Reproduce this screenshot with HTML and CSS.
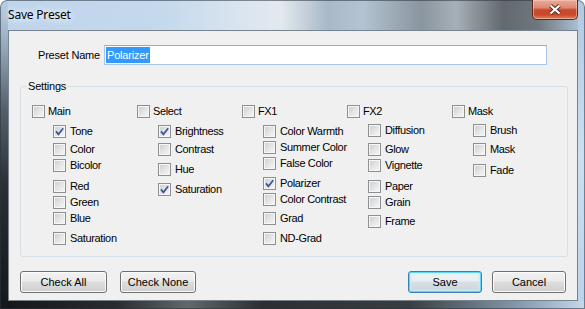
FILE: index.html
```html
<!DOCTYPE html>
<html>
<head>
<meta charset="utf-8">
<title>Save Preset</title>
<link rel="stylesheet" href="styles.css">
</head>
<body>
<div class="window">
  <div class="titlebar">
    <span class="title">Save Preset</span>
    <div class="close">
      <svg width="14" height="11" viewBox="0 0 14 11">
        <path class="x-shadow" d="M2.5 1.5 L11.5 9.5 M11.5 1.5 L2.5 9.5"/>
        <path class="x-mark" d="M2.5 1.5 L11.5 9.5 M11.5 1.5 L2.5 9.5"/>
      </svg>
    </div>
  </div>

  <div class="client">
    <div class="name-row">
      <label class="name-label">Preset Name</label>
      <div class="name-input"><span class="sel">Polarizer</span></div>
    </div>

    <fieldset class="settings">
      <legend>Settings</legend>
      <div class="cols">
        <!-- Main -->
        <div class="col">
          <div class="cb head"><span class="box"></span>Main</div>
          <div class="subs">
            <div class="cb m7"><span class="box on"><svg viewBox="0 0 11 11"><path d="M2 5.4 L4.4 8.3 L9.2 2.2"/></svg></span>Tone</div>
            <div class="cb m5"><span class="box"></span>Color</div>
            <div class="cb m3"><span class="box"></span>Bicolor</div>
            <div class="cb m8"><span class="box"></span>Red</div>
            <div class="cb m3"><span class="box"></span>Green</div>
            <div class="cb m3"><span class="box"></span>Blue</div>
            <div class="cb m7"><span class="box"></span>Saturation</div>
          </div>
        </div>
        <!-- Select -->
        <div class="col">
          <div class="cb head"><span class="box"></span>Select</div>
          <div class="subs">
            <div class="cb m7"><span class="box on"><svg viewBox="0 0 11 11"><path d="M2 5.4 L4.4 8.3 L9.2 2.2"/></svg></span>Brightness</div>
            <div class="cb m5"><span class="box"></span>Contrast</div>
            <div class="cb m7"><span class="box"></span>Hue</div>
            <div class="cb m7"><span class="box on"><svg viewBox="0 0 11 11"><path d="M2 5.4 L4.4 8.3 L9.2 2.2"/></svg></span>Saturation</div>
          </div>
        </div>
        <!-- FX1 -->
        <div class="col">
          <div class="cb head"><span class="box"></span>FX1</div>
          <div class="subs">
            <div class="cb m7"><span class="box"></span>Color Warmth</div>
            <div class="cb m3"><span class="box"></span>Summer Color</div>
            <div class="cb m3"><span class="box"></span>False Color</div>
            <div class="cb m7"><span class="box on"><svg viewBox="0 0 11 11"><path d="M2 5.4 L4.4 8.3 L9.2 2.2"/></svg></span>Polarizer</div>
            <div class="cb m3"><span class="box"></span>Color Contrast</div>
            <div class="cb m6"><span class="box"></span>Grad</div>
            <div class="cb m7"><span class="box"></span>ND-Grad</div>
          </div>
        </div>
        <!-- FX2 -->
        <div class="col">
          <div class="cb head"><span class="box"></span>FX2</div>
          <div class="subs">
            <div class="cb m6"><span class="box"></span>Diffusion</div>
            <div class="cb m6"><span class="box"></span>Glow</div>
            <div class="cb m3"><span class="box"></span>Vignette</div>
            <div class="cb m8"><span class="box"></span>Paper</div>
            <div class="cb m3"><span class="box"></span>Grain</div>
            <div class="cb m6"><span class="box"></span>Frame</div>
          </div>
        </div>
        <!-- Mask -->
        <div class="col">
          <div class="cb head"><span class="box"></span>Mask</div>
          <div class="subs">
            <div class="cb m6"><span class="box"></span>Brush</div>
            <div class="cb m6"><span class="box"></span>Mask</div>
            <div class="cb m8"><span class="box"></span>Fade</div>
          </div>
        </div>
      </div>
    </fieldset>

    <div class="buttons">
      <div class="btn-group">
        <button class="btn w-all">Check All</button>
        <button class="btn w-none">Check None</button>
      </div>
      <div class="btn-group right">
        <button class="btn default">Save</button>
        <button class="btn">Cancel</button>
      </div>
    </div>
  </div>
</div>
</body>
</html>
```

FILE: styles.css
```css
* {
    box-sizing: border-box;
}

body {
    margin: 0;
    background: #ffffff;
    font-family: "Liberation Sans", Arial, sans-serif;
    font-size: 11px;
    color: #000;
}

/* window frame (aero glass, faked with gradients) */
.window {
    width: 585px;
    height: 309px;
    display: flex;
    flex-direction: column;
    padding: 0 7px 8px 8px;
    border-radius: 7px 7px 0 0;
    overflow: hidden;
    background:
        linear-gradient(to bottom, #b8cfe6 0, #9fb3c6 12%, #56606a 35%, #2b2f33 60%, #15171a 100%) left top / 8px 100% no-repeat,
        linear-gradient(to right, #141516 0, #2a2c2e 20%, #64686b 32%, #2c2e31 45%, #3b3e41 70%, #8aa0b5 90%, #c6d8ea 100%) left bottom / 100% 8px no-repeat,
        linear-gradient(to bottom, #b0c8e0 0, #cddff0 50%, #bcd2e8 100%) right top / 7px 100% no-repeat,
        linear-gradient(to right, #bed4eb 0, #c5d9ed 28%, #dbe5ef 42%, #e3e9ee 48%, #a9b9c8 56%, #b3c3d2 62%, #8a959e 72%, #a7b0b7 78%, #63696e 86%, #6f777d 92%, #b4cbe2 100%);
    box-shadow: inset 0 0 0 1px rgba(40, 52, 66, 0.55);
}

.titlebar {
    height: 30px;
    display: flex;
    justify-content: space-between;
    align-items: flex-start;
}

.title {
    font-family: "Noto Sans", "Open Sans", sans-serif;
    font-size: 12px;
    line-height: 30px;
    letter-spacing: -0.2px;
    text-shadow: 0 0 6px #fff, 0 0 10px #fff;
}

.close {
    width: 46px;
    height: 20px;
    display: flex;
    align-items: center;
    justify-content: center;
    border: 1px solid #5e2a20;
    border-top: none;
    border-radius: 0 0 5px 5px;
    background: linear-gradient(#e9ab9a 0, #dc8a74 40%, #c9492d 52%, #c94a2c 78%, #dd8461 100%);
    box-shadow: inset 0 0 0 1px rgba(255, 210, 195, 0.5);
}

.x-shadow {
    stroke: #5a2418;
    stroke-width: 4;
    fill: none;
}

.x-mark {
    stroke: #ffffff;
    stroke-width: 2.2;
    fill: none;
}

/* client area */
.client {
    flex: 1;
    background: #f0f0f0;
    border: 1px solid #76828e;
    padding: 14px 9px 0 11px;
}

.name-row {
    display: flex;
    align-items: center;
}

.name-label {
    width: 80px;
    margin-right: 4px;
    text-align: right;
    letter-spacing: -0.2px;
}

.name-input {
    width: 443px;
    height: 20px;
    padding: 1px;
    background: #fff;
    border: 1px solid #a9c8e6;
    border-top-color: #86afd8;
}

.sel {
    display: inline-block;
    height: 16px;
    line-height: 16px;
    padding: 0 1px;
    background: #3399ff;
    color: #fff;
    letter-spacing: -0.2px;
}

.settings {
    margin: 15px 0 0;
    padding: 12px 8px 11px 11px;
    border: 1px solid #d5dfe5;
    border-radius: 3px;
    min-width: 0;
}

.settings legend {
    margin-left: -5px;
    padding: 0 1px;
    line-height: 13px;
    letter-spacing: -0.2px;
}

.cols {
    display: grid;
    grid-template-columns: repeat(4, 105px) auto;
}

.cb {
    display: flex;
    align-items: center;
    gap: 4px;
    height: 13px;
    line-height: 13px;
    white-space: nowrap;
    letter-spacing: -0.35px;
}

.cb.head {
    gap: 3px;
}

.subs {
    padding-left: 21px;
}

.m3 { margin-top: 3px; }
.m5 { margin-top: 5px; }
.m6 { margin-top: 6px; }
.m7 { margin-top: 7px; }
.m8 { margin-top: 8px; }

.box {
    flex: none;
    width: 13px;
    height: 13px;
    border: 1px solid #8e8f8f;
    background: linear-gradient(135deg, #c9cdd2 0, #e2e4e6 50%, #f7f7f7 100%);
    box-shadow: inset 0 0 0 1px #f6f6f6;
}

.box svg {
    display: block;
    width: 11px;
    height: 11px;
}

.box svg path {
    fill: none;
    stroke: #3a5590;
    stroke-width: 1.7;
}

/* buttons */
.buttons {
    display: flex;
    justify-content: space-between;
    margin-top: 14px;
    padding-right: 2px;
}

.btn-group {
    display: flex;
    gap: 13px;
}

.btn-group.right {
    gap: 10px;
}

.btn {
    width: 74px;
    height: 22px;
    padding: 0;
    font-family: inherit;
    font-size: 11px;
    color: #000;
    border: 1px solid #707070;
    border-radius: 3px;
    background: linear-gradient(#f2f2f2 0, #ebebeb 45%, #dddddd 50%, #cfcfcf 100%);
    box-shadow: inset 0 0 0 1px #fbfbfb;
}

.btn.w-all {
    width: 87px;
}

.btn.w-none {
    width: 76px;
}

.btn.default {
    border-color: #3c7fb1;
    background: linear-gradient(#eaf6fd 0, #d9f0fc 45%, #bee6fd 50%, #a7d9f5 100%);
    background: linear-gradient(#f0f4f6 0, #e8eef1 45%, #d8e0e5 50%, #cbd4da 100%);
    box-shadow: inset 0 0 0 1px #63d4f7, inset 0 0 2px 2px #c4eefc;
}
```
